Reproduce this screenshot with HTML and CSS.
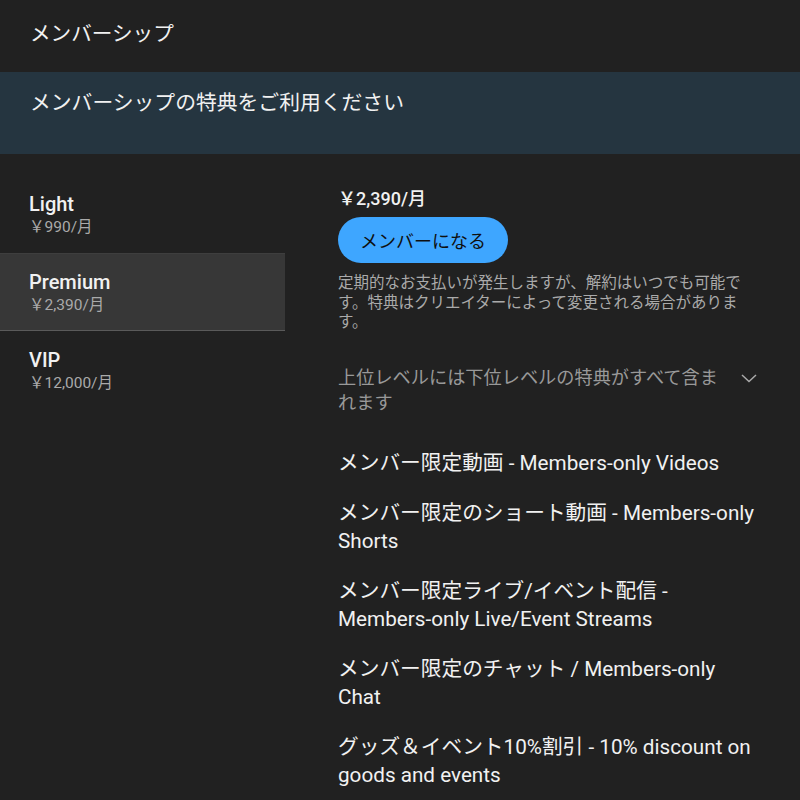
FILE: index.html
```html
<!DOCTYPE html>
<html lang="ja">
<head>
<meta charset="utf-8">
<title>メンバーシップ</title>
<link rel="stylesheet" href="styles.css">
</head>
<body>
<header class="header">メンバーシップ</header>
<div class="banner">メンバーシップの特典をご利用ください</div>
<main class="main">
  <nav class="tiers">
    <div class="tier">
      <div class="tier-name">Light</div>
      <div class="tier-price">￥990/月</div>
    </div>
    <div class="tier selected">
      <div class="tier-name">Premium</div>
      <div class="tier-price">￥2,390/月</div>
    </div>
    <div class="tier">
      <div class="tier-name">VIP</div>
      <div class="tier-price">￥12,000/月</div>
    </div>
  </nav>
  <section class="detail">
    <div class="price">￥2,390/月</div>
    <button class="join">メンバーになる</button>
    <p class="note">定期的なお支払いが発生しますが、解約はいつでも可能です。特典はクリエイターによって変更される場合があります。</p>
    <div class="expand">
      <span class="expand-text">上位レベルには下位レベルの特典がすべて含まれます</span>
      <svg class="chevron" width="18" height="12" viewBox="0 0 18 12"><path d="M2 3 L9 9.5 L16 3" fill="none" stroke="#aaaaaa" stroke-width="1.5"/></svg>
    </div>
    <ul class="perks">
      <li>メンバー限定動画 - Members-only Videos</li>
      <li>メンバー限定のショート動画 - Members-only Shorts</li>
      <li>メンバー限定ライブ/イベント配信 - Members-only Live/Event Streams</li>
      <li>メンバー限定のチャット / Members-only Chat</li>
      <li>グッズ＆イベント10%割引 - 10% discount on goods and events</li>
    </ul>
  </section>
</main>
</body>
</html>
```
FILE: styles.css
```css
html, body {
  margin: 0;
  padding: 0;
  background: #212121;
  color: #f1f1f1;
  font-family: Roboto, "Noto Sans CJK JP", sans-serif;
}
.header {
  height: 72px;
  box-sizing: border-box;
  padding: 20px 0 0 30px;
  font-size: 20.6px;
  line-height: 28px;
  color: #f1f1f1;
}
.banner {
  height: 82px;
  box-sizing: border-box;
  background: #253540;
  padding: 17px 0 0 30px;
  font-size: 20.8px;
  line-height: 28px;
  color: #f1f1f1;
}
.main {
  display: flex;
  gap: 53px;
}
.tiers {
  width: 285px;
  padding-top: 21px;
  flex-shrink: 0;
}
.tier {
  padding: 17px 29px 15px;
  border-top: 1px solid transparent;
  border-bottom: 1px solid transparent;
}
.tier.selected {
  background: #373737;
  border-top-color: #3e3e3e;
  border-bottom-color: #5a5a5a;
}
.tier-name {
  font-size: 20px;
  font-weight: 500;
  line-height: 25px;
  color: #f1f1f1;
}
.tier-price {
  font-size: 15.5px;
  line-height: 21px;
  color: #aaaaaa;
}
.tier {
  padding-top: 16px;
  padding-bottom: 14px;
}
.detail {
  width: 422px;
  padding-top: 34px;
}
.price {
  font-size: 18px;
  font-weight: 500;
  line-height: 22px;
  color: #f1f1f1;
}
.join {
  display: block;
  margin-top: 7px;
  height: 46px;
  width: 170px;
  border: none;
  border-radius: 23px;
  background: #3ea6ff;
  color: #0f0f0f;
  font-family: Roboto, "Noto Sans CJK JP", sans-serif;
  font-size: 18px;
  padding: 0;
}
.note {
  margin: 11px 0 0;
  width: 412px;
  font-size: 15.5px;
  line-height: 19.5px;
  color: #aaaaaa;
}
.expand {
  margin-top: 32px;
  display: flex;
  align-items: flex-start;
  gap: 10px;
}
.expand-text {
  width: 392px;
  font-size: 18.2px;
  line-height: 25px;
  color: #999999;
}
.chevron {
  margin-top: 7px;
}
.perks {
  list-style: none;
  margin: 34px 0 0;
  padding: 0;
}
.perks li {
  font-size: 20.7px;
  line-height: 28px;
  color: #f1f1f1;
  margin-bottom: 22px;
}
```
